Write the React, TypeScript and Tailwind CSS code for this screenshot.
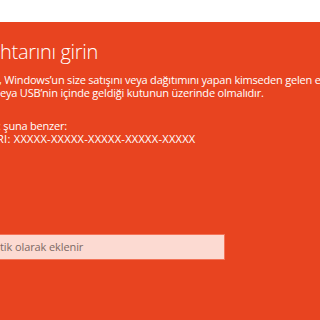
export default function App() {
    return (
        <div className="w-[320px] h-[320px] overflow-hidden bg-[#e84420] flex flex-col" style={{ fontFamily: '"Open Sans", "Noto Sans", sans-serif' }}>
            <div className="h-[22px] bg-white shrink-0" />

            <div className="flex flex-col whitespace-nowrap text-white">
                {/* Title, cut off on the left */}
                <h1 className="mt-[17px] text-[20px] leading-[25px] font-light tracking-[-0.3px]">htarını girin</h1>

                <div className="mt-[9px] text-[11px] leading-[13px] tracking-[-0.2px]">
                    <p className="-ml-[1px]">, Windows’un size satışını veya dağıtımını yapan kimseden gelen e-postada ya da DVD</p>
                    <p>eya USB’nin içinde geldiği kutunun üzerinde olmalıdır.</p>
                </div>

                <div className="mt-[20px] text-[11px] leading-[13px]">
                    <p className="-ml-[2px] tracking-[-0.2px]">: şuna benzer:</p>
                    <p className="-ml-[3px] tracking-[0.3px]">RI: XXXXX-XXXXX-XXXXX-XXXXX-XXXXX</p>
                </div>

                <div className="mt-[89px] w-[226px] h-[26px] -ml-[1px] bg-[#fcdad2] border border-[#f37358] flex items-center">
                    <span className="text-[11px] text-[#7d6964] tracking-[-0.1px]">tik olarak eklenir</span>
                </div>
            </div>
        </div>
    );
}
